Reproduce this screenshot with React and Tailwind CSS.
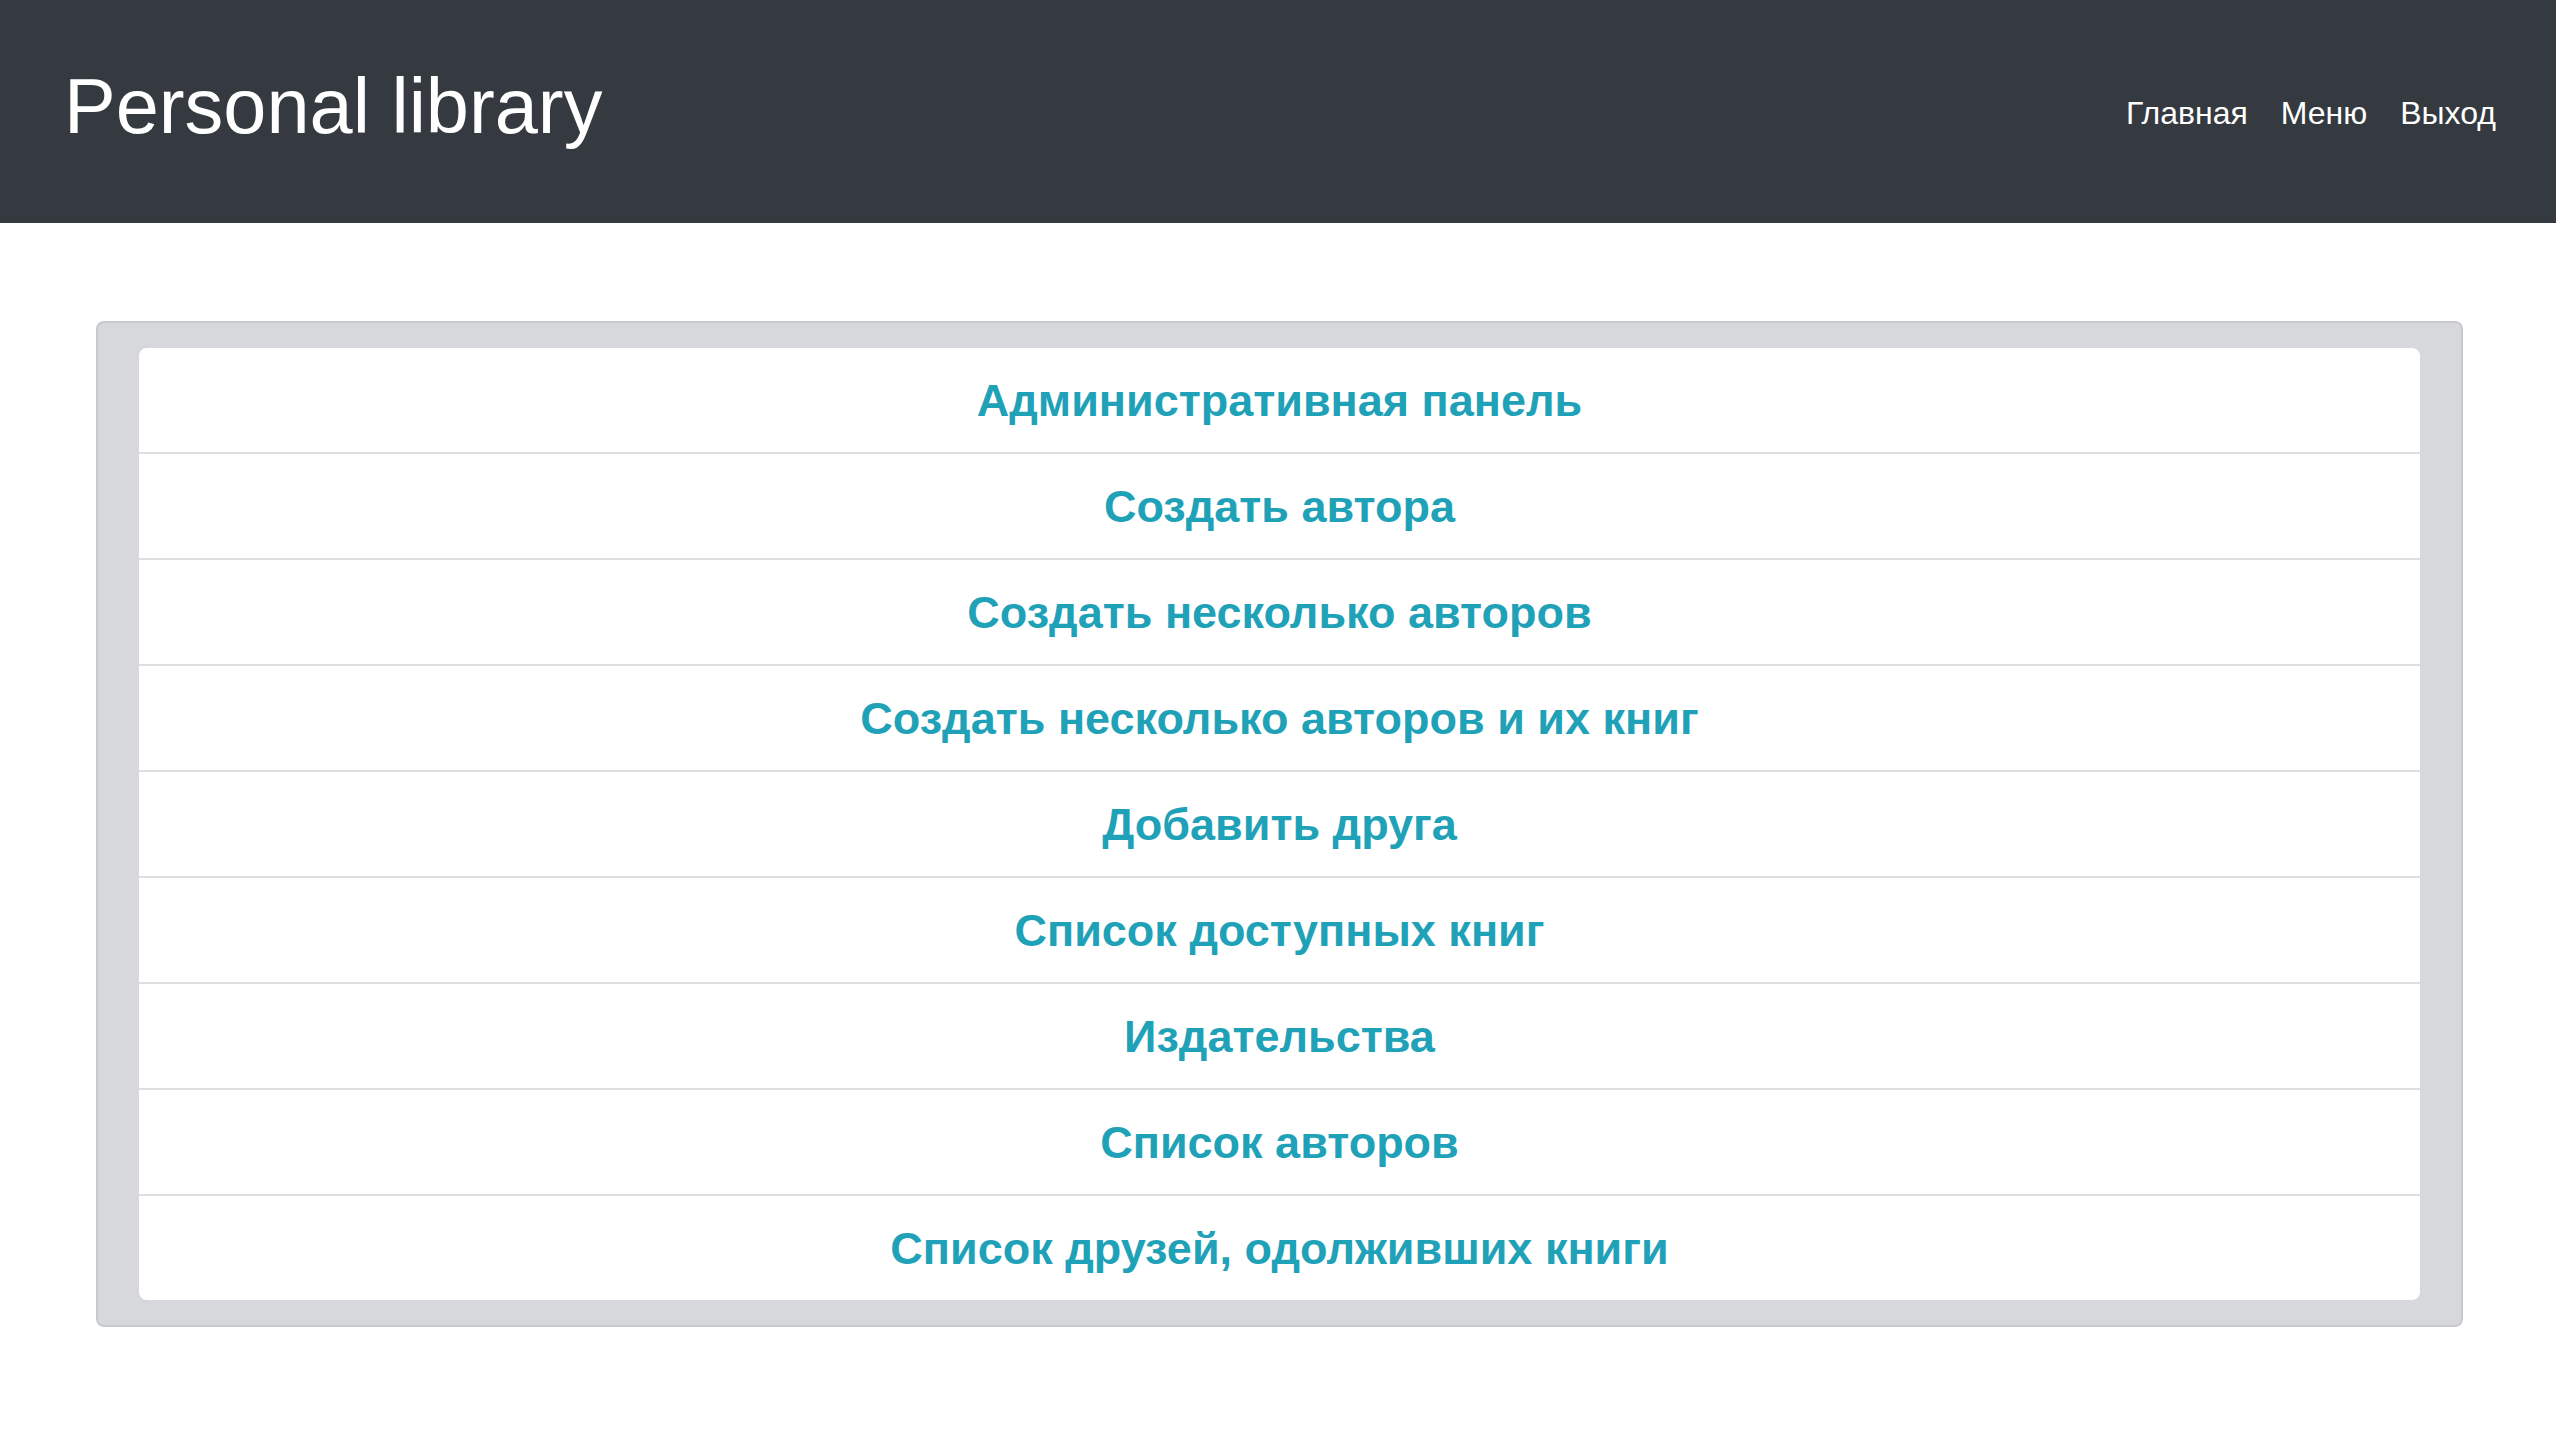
export default function App() {
  const items = [
    "Административная панель",
    "Создать автора",
    "Создать несколько авторов",
    "Создать несколько авторов и их книг",
    "Добавить друга",
    "Список доступных книг",
    "Издательства",
    "Список авторов",
    "Список друзей, одолживших книги",
  ];
  return (
    <div className="min-h-[1440px] bg-white" style={{ fontFamily: '"Liberation Sans", Arial, sans-serif' }}>
      <header className="flex h-[223px] items-start justify-between bg-[#343a40] pl-[64px] pr-[60px]">
        <div className="mt-[68px] text-[77.5px] leading-none text-white">Personal library</div>
        <nav className="mt-[97px] flex gap-[33px] text-[32px] leading-none text-white">
          <a href="#">Главная</a>
          <a href="#">Меню</a>
          <a href="#">Выход</a>
        </nav>
      </header>
      <main className="ml-[96px] mr-[93px] mt-[98px] rounded-[8px] border-2 border-[#c8c9cb] bg-[#d6d8db] px-[41px] py-[25px]">
        <ul className="overflow-hidden rounded-[8px] bg-white">
          {items.map((t, i) => (
            <li
              key={i}
              className={
                "flex items-center justify-center text-[45px] font-bold text-[#1fa2b8]" +
                (i > 0 ? " h-[106px] border-t-2 border-[#dfdfdf]" : " h-[104px]")
              }
            >
              <a href="#" className="leading-none">{t}</a>
            </li>
          ))}
        </ul>
      </main>
    </div>
  );
}
